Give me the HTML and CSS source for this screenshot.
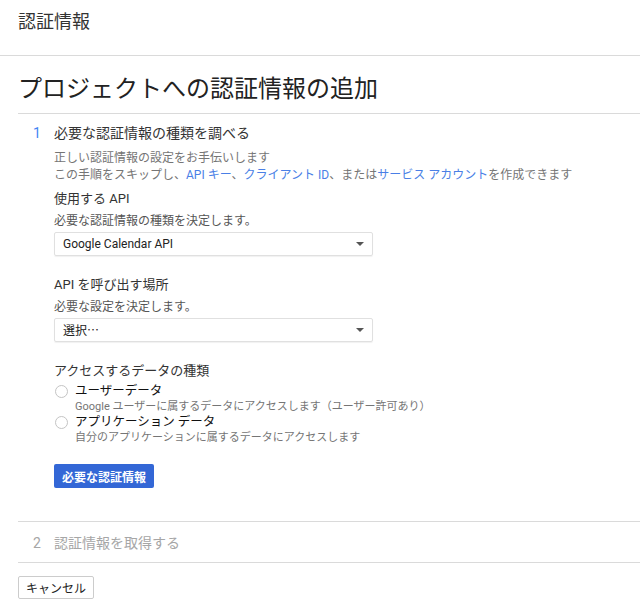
FILE: index.html
```html
<!DOCTYPE html>
<html lang="ja">

<head>
    <meta charset="UTF-8">
    <meta name="viewport" content="width=device-width, initial-scale=1.0">
    <link rel="stylesheet" href="styles.css">
    <title>認証情報</title>
</head>

<body>
    <div id="appbar">認証情報</div>

    <div id="page">
        <h1>プロジェクトへの認証情報の追加</h1>

        <div class="step">
            <div class="step-head">
                <span class="step-num">1</span>
                <span class="step-title">必要な認証情報の種類を調べる</span>
            </div>
            <div class="step-body">
                <p class="intro">正しい認証情報の設定をお手伝いします<br>
                    この手順をスキップし、<a href="#">API キー</a>、<a href="#">クライアント ID</a>、または<a href="#">サービス アカウント</a>を作成できます</p>

                <div class="field">
                    <div class="label">使用する API</div>
                    <div class="hint">必要な認証情報の種類を決定します。</div>
                    <div class="select">Google Calendar API<span class="arrow"></span></div>
                </div>

                <div class="field">
                    <div class="label">API を呼び出す場所</div>
                    <div class="hint">必要な設定を決定します。</div>
                    <div class="select placeholder">選択…<span class="arrow"></span></div>
                </div>

                <div class="field">
                    <div class="label">アクセスするデータの種類</div>
                    <label class="radio">
                        <span class="circle"></span>
                        <span>
                            <span class="radio-title">ユーザーデータ</span>
                            <span class="radio-desc">Google ユーザーに属するデータにアクセスします（ユーザー許可あり）</span>
                        </span>
                    </label>
                    <label class="radio">
                        <span class="circle"></span>
                        <span>
                            <span class="radio-title">アプリケーション データ</span>
                            <span class="radio-desc">自分のアプリケーションに属するデータにアクセスします</span>
                        </span>
                    </label>
                </div>

                <button id="submit">必要な認証情報</button>
            </div>
        </div>

        <div class="step disabled">
            <div class="step-head">
                <span class="step-num">2</span>
                <span class="step-title">認証情報を取得する</span>
            </div>
        </div>

        <button id="cancel">キャンセル</button>
    </div>
</body>

</html>
```

FILE: styles.css
```css
body {
    margin: 0;
    background: white;
    color: #212121;
    font-family: Roboto, "Noto Sans CJK JP", sans-serif;
}

#appbar {
    height: 44px;
    padding: 11px 0 0 18px;
    font-size: 18px;
    line-height: 22px;
    color: #333;
    border-bottom: 1px solid #dadada;
}

#page {
    padding-left: 18px;
}

h1 {
    margin: 17px 0 0;
    padding-bottom: 8px;
    font-size: 24px;
    line-height: 32px;
    font-weight: normal;
    color: #222;
    border-bottom: 1px solid #dadada;
}

.step {
    padding-bottom: 33px;
    border-bottom: 1px solid #dadada;
}

.step-head {
    display: flex;
    margin-top: 9px;
    font-size: 14px;
    line-height: 20px;
}

.step-num {
    width: 21px;
    padding-left: 15px;
    color: #4285f4;
}

.step-title {
    color: #333;
}

.step-body {
    padding-left: 36px;
}

.intro {
    margin: 7px 0 0;
    font-size: 12px;
    line-height: 17px;
    color: #757575;
}

a {
    color: #4a7fe6;
    text-decoration: none;
}

.field {
    margin-top: 20px;
}

.field:first-of-type {
    margin-top: 6px;
}

.label {
    font-size: 13px;
    line-height: 18px;
    color: #333;
}

.hint {
    margin-top: 5px;
    font-size: 12px;
    line-height: 16px;
    color: #555;
}

.select {
    position: relative;
    box-sizing: border-box;
    width: 319px;
    height: 24px;
    margin-top: 3px;
    padding-left: 8px;
    font-size: 12px;
    line-height: 22px;
    color: #222;
    border: 1px solid #e0e0e0;
    border-radius: 2px;
    box-shadow: 0 1px 1px rgba(0, 0, 0, 0.06);
}

.placeholder {
    font-family: "Noto Sans CJK JP", sans-serif;
}

.arrow {
    position: absolute;
    right: 8px;
    top: 9px;
    border-left: 4px solid transparent;
    border-right: 4px solid transparent;
    border-top: 4px solid #555;
}

.radio {
    display: flex;
    margin-top: 3px;
}

.radio + .radio {
    margin-top: 0;
}

.circle {
    box-sizing: border-box;
    width: 13px;
    height: 13px;
    margin: 2px 7px 0 1px;
    border: 1px solid #c4c4c4;
    border-radius: 50%;
    flex-shrink: 0;
}

.radio-title {
    display: block;
    font-size: 12.5px;
    line-height: 16px;
    color: #111;
}

.radio-desc {
    display: block;
    font-size: 11px;
    line-height: 15px;
    color: #757575;
}

#submit {
    display: block;
    height: 24px;
    margin-top: 19px;
    padding: 0 8px;
    font-family: inherit;
    font-size: 12px;
    font-weight: bold;
    color: white;
    background: #3367d6;
    border: none;
    border-radius: 2px;
}

.disabled {
    padding-bottom: 9px;
}

.disabled .step-head {
    margin-top: 11px;
}

.disabled .step-num,
.disabled .step-title {
    color: #a6a6a6;
}

#cancel {
    display: block;
    height: 23px;
    margin-top: 13px;
    padding: 0 7px;
    font-family: inherit;
    font-size: 12px;
    color: #222;
    background: white;
    border: 1px solid #ccc;
    border-radius: 2px;
}
```
